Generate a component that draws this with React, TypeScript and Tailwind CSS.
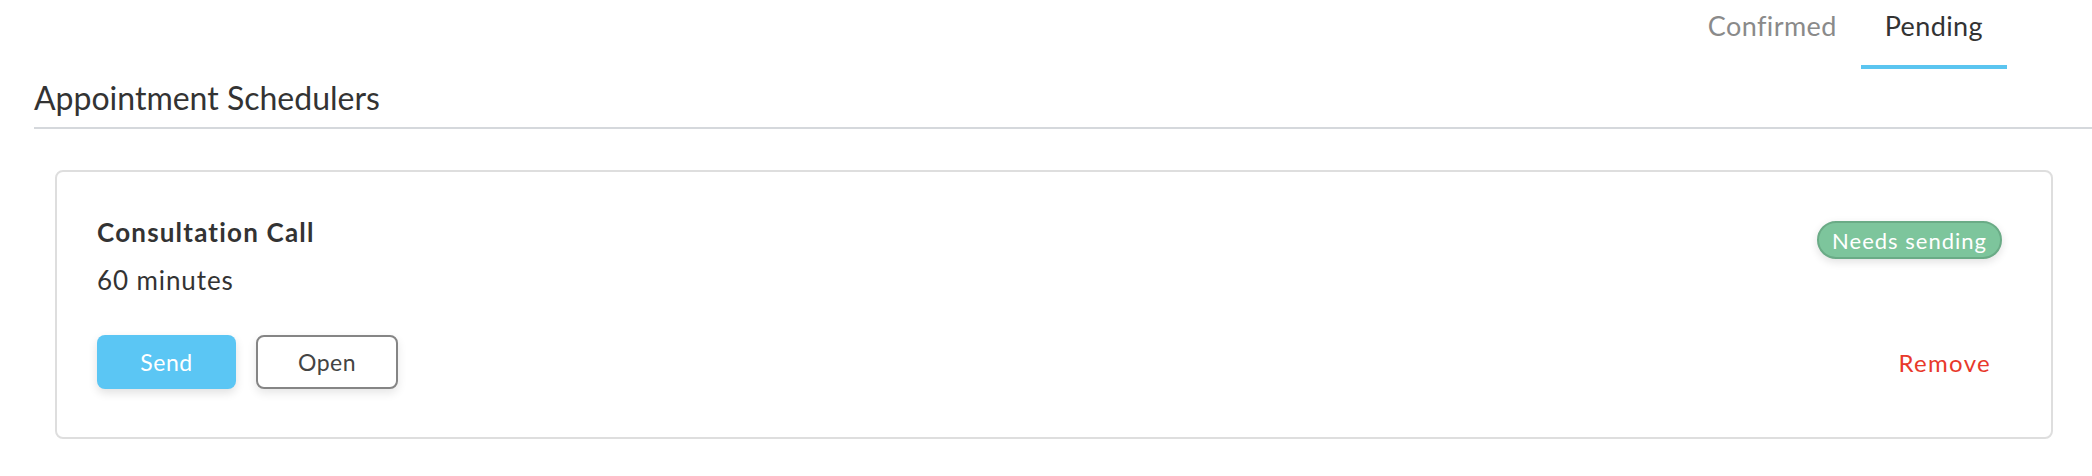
import React from "react"

const font = { fontFamily: "Lato, 'Open Sans', sans-serif" }

function Tabs() {
  const tabs = [
    { label: "Confirmed", active: false },
    { label: "Pending", active: true },
  ]
  return (
    <div className="flex h-[69px] justify-end pr-[85px]">
      {tabs.map((t) => (
        <div
          key={t.label}
          className={
            t.active
              ? "flex items-start border-b-4 border-[#5bc5f0] px-6 pt-[6px] text-[27px] tracking-[0.4px] text-[#333]"
              : "flex items-start border-b-4 border-transparent px-6 pt-[6px] text-[27px] tracking-[0.4px] text-[#8a8a8a]"
          }
        >
          {t.label}
        </div>
      ))}
    </div>
  )
}

function SchedulerCard() {
  return (
    <div className="mx-[39px] ml-[55px] mt-[41px] flex h-[269px] justify-between rounded-lg border-2 border-[#dedede] pb-[48px] pl-[40px] pr-[49px] pt-[44px]">
      <div className="flex flex-col">
        <h3 className="text-[26px] font-bold leading-[32px] tracking-[1.2px] text-[#333]">Consultation Call</h3>
        <p className="mt-[16px] text-[26px] leading-[32px] tracking-[0.9px] text-[#333]">60 minutes</p>
        <div className="mt-auto flex gap-[20px]">
          <button className="h-[54px] w-[139px] rounded-lg bg-[#5bc6f4] text-[23px] tracking-[0.5px] text-white shadow-[0_4px_10px_rgba(0,0,0,0.12)]">
            Send
          </button>
          <button className="h-[54px] w-[142px] rounded-lg border-2 border-[#858585] bg-white text-[23px] tracking-[0.5px] text-[#444] shadow-[0_4px_10px_rgba(0,0,0,0.1)]">
            Open
          </button>
        </div>
      </div>
      <div className="flex flex-col items-end justify-between">
        <span className="mt-[5px] flex h-[38px] items-center rounded-full border-2 border-[#6aab86] bg-[#7dc59c] px-[13px] text-[22px] tracking-[1px] text-white shadow-[0_3px_8px_rgba(0,0,0,0.12)]">
          Needs sending
        </span>
        <button className="mb-[8px] mr-[11px] text-[24px] tracking-[1.3px] text-[#e8392b]">Remove</button>
      </div>
    </div>
  )
}

export default function App() {
  return (
    <div className="min-h-screen bg-white" style={font}>
      <Tabs />
      <div className="ml-[34px] flex h-[60px] items-center border-b-2 border-[#d5d8dc]">
        <h1 className="text-[32px] text-[#333]">Appointment Schedulers</h1>
      </div>
      <SchedulerCard />
    </div>
  )
}
